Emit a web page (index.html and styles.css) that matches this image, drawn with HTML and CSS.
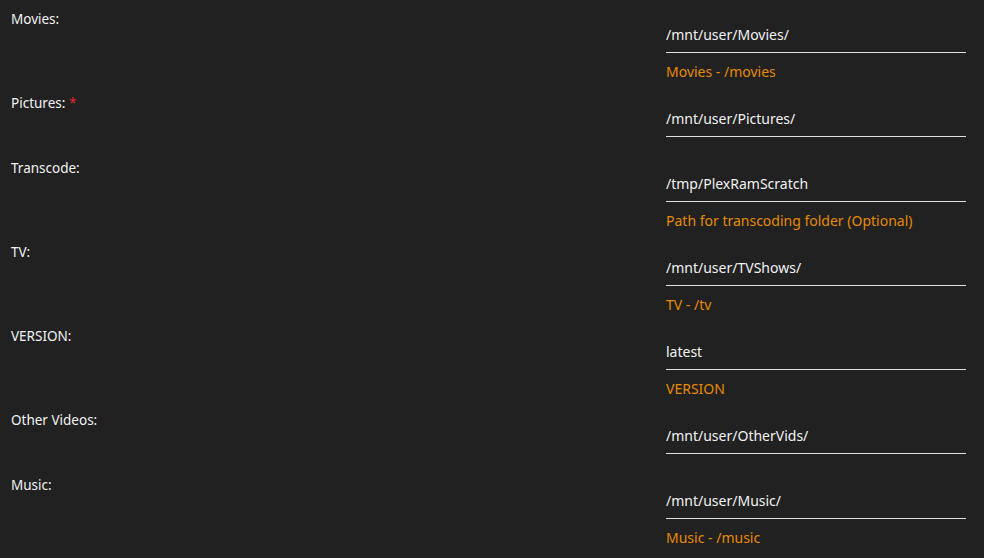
FILE: index.html
```html
<!DOCTYPE html>
<html lang="en">

<head>
    <meta charset="UTF-8">
    <meta name="viewport" content="width=device-width, initial-scale=1.0">
    <title>Container paths</title>
    <link rel="stylesheet" href="styles.css">
</head>

<body>
    <div class="settings">
        <div class="row">
            <label for="movies">Movies:</label>
            <div class="field">
                <input id="movies" type="text" value="/mnt/user/Movies/">
                <div class="desc">Movies - /movies</div>
            </div>
        </div>
        <div class="row">
            <label for="pictures">Pictures: <span class="req">*</span></label>
            <div class="field">
                <input id="pictures" type="text" value="/mnt/user/Pictures/">
            </div>
        </div>
        <div class="row">
            <label for="transcode">Transcode:</label>
            <div class="field">
                <input id="transcode" type="text" value="/tmp/PlexRamScratch">
                <div class="desc">Path for transcoding folder (Optional)</div>
            </div>
        </div>
        <div class="row">
            <label for="tv">TV:</label>
            <div class="field">
                <input id="tv" type="text" value="/mnt/user/TVShows/">
                <div class="desc">TV - /tv</div>
            </div>
        </div>
        <div class="row">
            <label for="version">VERSION:</label>
            <div class="field">
                <input id="version" type="text" value="latest">
                <div class="desc">VERSION</div>
            </div>
        </div>
        <div class="row">
            <label for="othervids">Other Videos:</label>
            <div class="field">
                <input id="othervids" type="text" value="/mnt/user/OtherVids/">
            </div>
        </div>
        <div class="row">
            <label for="music">Music:</label>
            <div class="field">
                <input id="music" type="text" value="/mnt/user/Music/">
                <div class="desc">Music - /music</div>
            </div>
        </div>
    </div>
</body>

</html>
```

FILE: styles.css
```css
body {
    margin: 0;
    background-color: #212121;
    font-family: 'Noto Sans', 'Open Sans', sans-serif;
    color: #f2f2f2;
}

.settings {
    padding: 10px 18px 0 11px;
}

.row {
    display: grid;
    grid-template-columns: 1fr 300px;
    min-height: 65px;
    padding-bottom: 13px;
    box-sizing: border-box;
}

label {
    font-size: 13.5px;
    line-height: 18px;
}

.req {
    color: #e22828;
}

.field {
    padding-top: 11px;
}

input[type=text] {
    display: block;
    width: 100%;
    box-sizing: border-box;
    margin: 0;
    padding: 4px 0 7px;
    font-family: inherit;
    font-size: 14px;
    line-height: 20px;
    color: #f2f2f2;
    background: transparent;
    border: none;
    border-bottom: 1px solid #e0e0e0;
    outline: none;
}

.desc {
    margin-top: 10px;
    font-size: 14px;
    line-height: 18px;
    color: #e68a00;
}
```
